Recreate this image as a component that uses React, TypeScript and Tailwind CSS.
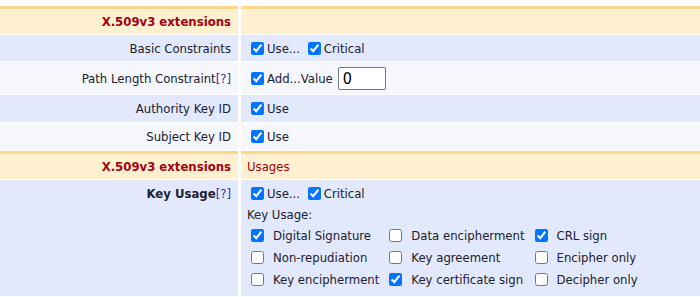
import React from 'react';

const font = { fontFamily: '"DejaVu Sans Condensed", "DejaVu Sans", Tahoma, sans-serif' };

function Check({ checked }: { checked?: boolean }) {
  return (
    <input
      type="checkbox"
      defaultChecked={checked}
      className="w-[13px] h-[13px] ml-[4px] mr-[3px] my-0 align-[-2px]"
    />
  );
}

function Help() {
  return <span className="text-[#3a2fa0]">[?]</span>;
}

const usages: [string, boolean][] = [
  ['Digital Signature', true],
  ['Data encipherment', false],
  ['CRL sign', true],
  ['Non-repudiation', false],
  ['Key agreement', false],
  ['Encipher only', false],
  ['Key encipherment', false],
  ['Key certificate sign', true],
  ['Decipher only', false],
];

export default function App() {
  const head = 'bg-[#fff0cf] border-t-[3px] border-[#fcd88b] h-[28px] flex items-center';
  const blue = 'bg-[#e3e9fc]';
  const light = 'bg-[#f5f7fd]';
  const label = 'flex items-center justify-end pr-[7px]';
  const value = 'flex items-center pl-[6px]';

  return (
    <div className="w-[700px] bg-white pt-[6px] text-[13px] text-[#20202e] leading-none" style={font}>
      <div className="grid grid-cols-[238px_1fr] gap-x-[3px] gap-y-px">
        {/* header */}
        <div className={`${head} justify-end pr-[7px] font-bold text-[#a50010]`}>X.509v3 extensions</div>
        <div className={head}></div>

        <div className={`${blue} ${label} h-[26px]`}>Basic Constraints</div>
        <div className={`${blue} ${value} h-[26px]`}>
          <span>
            <Check checked />Use...{' '}
            <Check checked />Critical
          </span>
        </div>

        <div className={`${light} ${label} h-[32px]`}>
          Path Length Constraint<Help />
        </div>
        <div className={`${light} ${value} h-[32px]`}>
          <Check checked />
          <span>Add...Value</span>
          <input
            type="text"
            defaultValue="0"
            className="ml-[5px] w-[48px] h-[23px] border border-[#767676] rounded-[2px] bg-white px-[4px] text-[16px] text-black"
            style={font}
          />
        </div>

        <div className={`${blue} ${label} h-[27px]`}>Authority Key ID</div>
        <div className={`${blue} ${value} h-[27px]`}>
          <span>
            <Check checked />Use
          </span>
        </div>

        <div className={`${light} ${label} h-[27px]`}>Subject Key ID</div>
        <div className={`${light} ${value} h-[27px]`}>
          <span>
            <Check checked />Use
          </span>
        </div>

        {/* header 2 */}
        <div className={`${head} justify-end pr-[7px] font-bold text-[#a50010]`}>X.509v3 extensions</div>
        <div className={`${head} pl-[6px] text-[#a50010]`}>Usages</div>

        <div className={`${blue} pt-[2px] pb-[6px]`}>
          <div className={`${label} h-[22px] font-bold`}>
            Key Usage<span className="font-normal"><Help /></span>
          </div>
        </div>
        <div className={`${blue} pt-[2px] pb-[6px] pl-[6px]`}>
          <div className="h-[22px] flex items-center">
            <span>
              <Check checked />Use...{' '}
              <Check checked />Critical
            </span>
          </div>
          <div className="h-[20px] flex items-center">Key Usage:</div>
          <div className="grid grid-cols-[auto_auto_auto] justify-start gap-x-[10px] pl-[4px]">
            {usages.map(([name, on]) => (
              <div key={name} className="h-[22px] flex items-center">
                <input type="checkbox" defaultChecked={on} className="w-[13px] h-[13px] m-0 mr-[9px]" />
                <span>{name}</span>
              </div>
            ))}
          </div>
        </div>
      </div>
    </div>
  );
}
